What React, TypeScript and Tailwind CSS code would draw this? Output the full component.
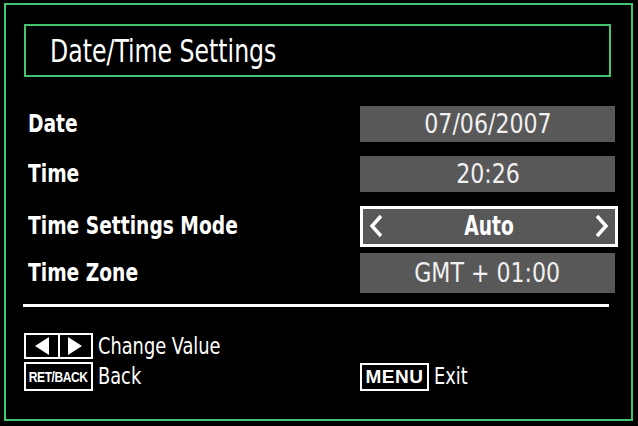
const font = { fontFamily: '"DejaVu Sans Condensed", "Liberation Sans Narrow", "Liberation Sans", sans-serif' };

function ValueBox({ children, tall }: { children: React.ReactNode; tall?: boolean }) {
  return (
    <div
      className={`flex w-[255px] shrink-0 items-center justify-center bg-[#585858] text-[27px] text-[#f0f0f0] ${
        tall ? 'h-[40px]' : 'h-[36px]'
      }`}
    >
      <span className="inline-block scale-x-[0.91] whitespace-nowrap">{children}</span>
    </div>
  );
}

function Row({ label, children, className }: { label: string; children: React.ReactNode; className: string }) {
  return (
    <div className={`flex h-[42px] items-center ${className}`}>
      <div className="w-[336px] shrink-0 pl-[4px] text-[25px] font-bold text-white">
        <span className="inline-block origin-left scale-x-[0.83] whitespace-nowrap">{label}</span>
      </div>
      {children}
    </div>
  );
}

export default function App() {
  return (
    <div className="h-[426px] w-[638px] bg-black pb-[5px] pl-[4px] pr-[5px] pt-[3px]" style={font}>
      <div className="flex h-full flex-col border-2 border-[#3fc66c] pl-[18px] pr-[20px]">
        <div className="mt-[19px] flex h-[53px] items-center border-2 border-[#3fc66c] pl-[24px] text-[32px] text-white">
          <span className="inline-block origin-left scale-x-[0.82] whitespace-nowrap">Date/Time Settings</span>
        </div>

        <Row label="Date" className="mt-[26px]">
          <ValueBox>07/06/2007</ValueBox>
        </Row>
        <Row label="Time" className="mt-[8px]">
          <ValueBox>20:26</ValueBox>
        </Row>
        <Row label="Time Settings Mode" className="mt-[10px]">
          <div className="flex h-[41px] w-[258px] shrink-0 items-center justify-between border-[3px] border-white bg-[#585858] px-[6px] text-[26px] font-bold text-white">
            <svg width="14" height="24" viewBox="0 0 14 24">
              <polyline points="12,2 3,12 12,22" fill="none" stroke="white" strokeWidth="3.5" />
            </svg>
            <span className="inline-block scale-x-[0.8]">Auto</span>
            <svg width="14" height="24" viewBox="0 0 14 24">
              <polyline points="2,2 11,12 2,22" fill="none" stroke="white" strokeWidth="3.5" />
            </svg>
          </div>
        </Row>
        <Row label="Time Zone" className="mt-[5px]">
          <ValueBox tall>GMT + 01:00</ValueBox>
        </Row>

        <div className="ml-[-1px] mt-[10px] h-[3px] w-[586px] bg-white" />

        <div className="mt-[26px] flex h-[26px] items-center leading-none">
          <div className="flex h-[26px] w-[69px] shrink-0 border-2 border-white">
            <div className="flex flex-1 items-center justify-center border-r-2 border-white">
              <svg width="16" height="18" viewBox="0 0 16 18">
                <polygon points="15,0 15,18 1,9" fill="white" />
              </svg>
            </div>
            <div className="flex flex-1 items-center justify-center">
              <svg width="16" height="18" viewBox="0 0 16 18">
                <polygon points="1,0 1,18 15,9" fill="white" />
              </svg>
            </div>
          </div>
          <span className="ml-[5px] inline-block origin-left scale-x-[0.86] whitespace-nowrap text-[23px] text-white">
            Change Value
          </span>
        </div>

        <div className="mt-[3px] flex h-[29px] items-center leading-none">
          <div
            className="flex h-[29px] w-[69px] shrink-0 items-center justify-center border-2 border-white text-[14px] font-bold text-white"
            style={{ fontFamily: '"Liberation Sans", sans-serif' }}
          >
            <span className="inline-block scale-x-[0.86] whitespace-nowrap tracking-[-0.5px]">RET/BACK</span>
          </div>
          <span className="ml-[5px] inline-block w-[262px] shrink-0 origin-left scale-x-[0.86] text-[23px] text-white">
            Back
          </span>
          <div
            className="flex h-[28px] w-[69px] shrink-0 items-center justify-center border-2 border-white text-[19px] font-bold tracking-[0.5px] text-white"
            style={{ fontFamily: '"Liberation Sans", sans-serif' }}
          >
            MENU
          </div>
          <span className="ml-[5px] inline-block origin-left scale-x-[0.86] text-[23px] text-white">Exit</span>
        </div>
      </div>
    </div>
  );
}
